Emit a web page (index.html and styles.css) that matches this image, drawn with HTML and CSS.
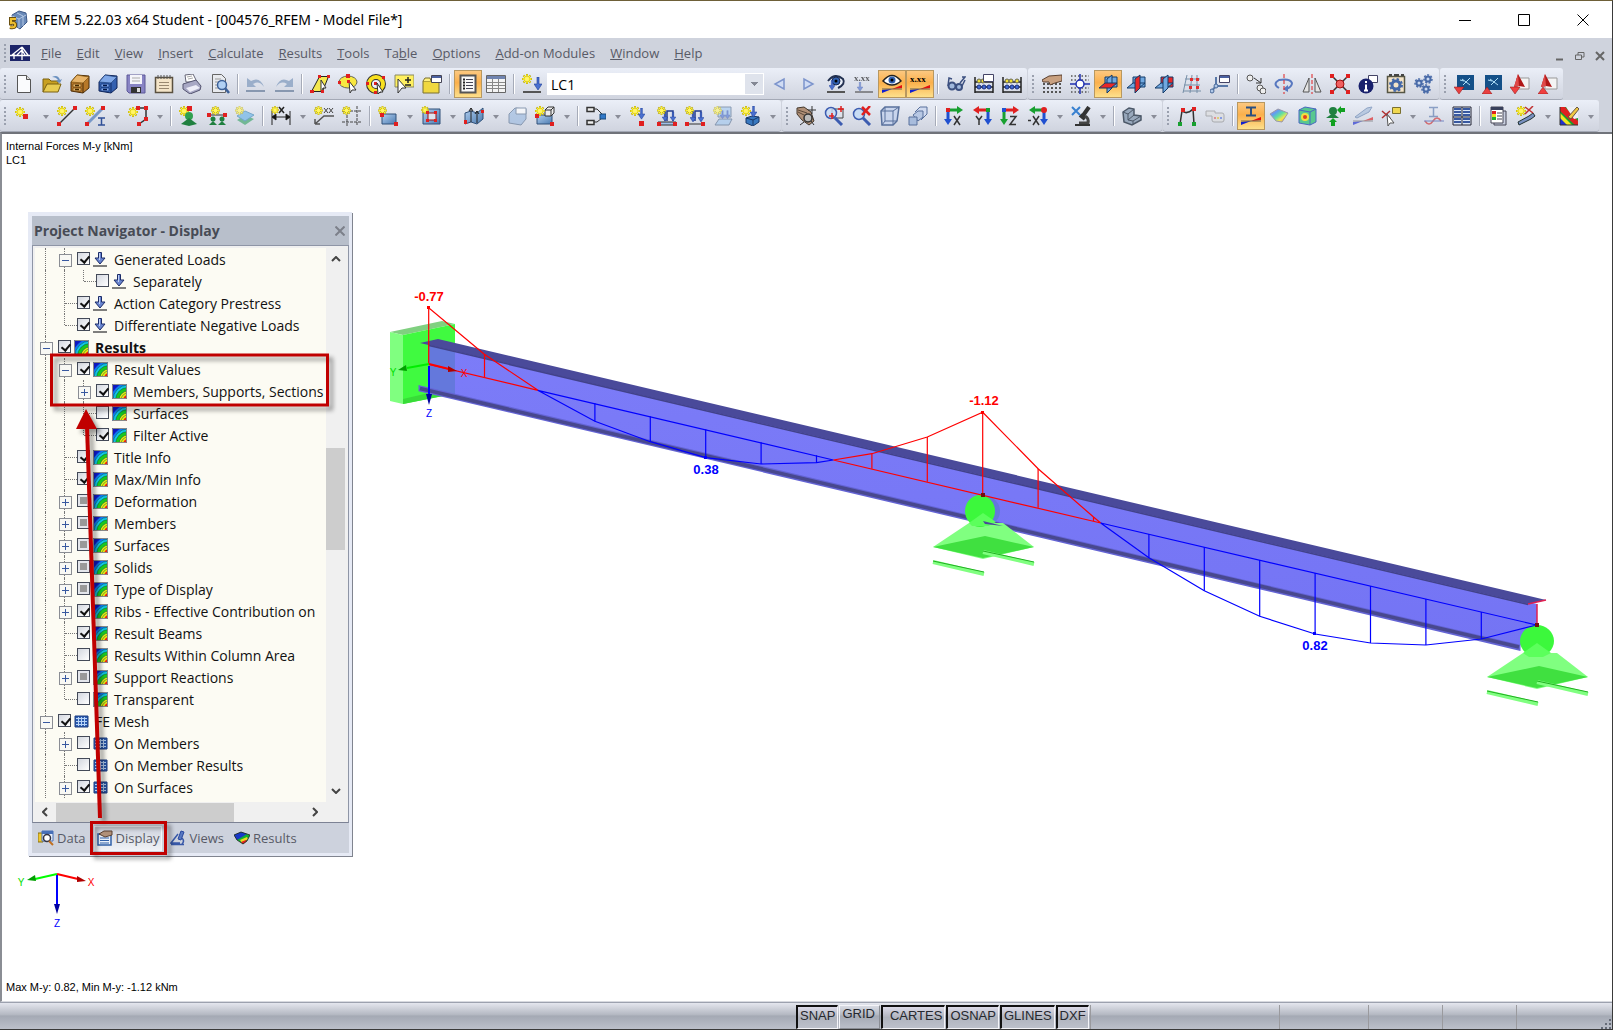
FILE: index.html
```
<!DOCTYPE html>
<html lang="en">
<head>
    <meta charset="UTF-8">
    <meta name="viewport" content="width=device-width, initial-scale=1.0">
    <title>RFEM 5.22.03 x64 Student</title>
    <link rel="stylesheet" href="styles.css">
</head>
<body>
    <!-- shared icon parts -->
    <svg class="sprite" aria-hidden="true">
        <defs>
            <linearGradient id="g-blue" x1="0" y1="0" x2="1" y2="1"><stop offset="0" stop-color="#b4d0f0"/><stop offset="1" stop-color="#4a7ab0"/></linearGradient>
            <linearGradient id="g-web" x1="0" y1="0" x2="0" y2="1"><stop offset="0" stop-color="#7c7cf8"/><stop offset="1" stop-color="#7474f4"/></linearGradient>
            <linearGradient id="g-rain" x1="0" y1="0" x2="1" y2="1"><stop offset="0" stop-color="#c070e0"/><stop offset=".3" stop-color="#60a0f0"/><stop offset=".5" stop-color="#60e0a0"/><stop offset=".7" stop-color="#f0e850"/><stop offset="1" stop-color="#f06040"/></linearGradient>
            <symbol id="star" viewBox="0 0 10 10"><path d="M5 0v10M0 5h10M1.500 1.500l7 7M8.500 1.500l-7 7" stroke="#b8a800" stroke-width="2"/><path d="M5 .5v9M.5 5h9M2 2l6 6M8 2L2 8" stroke="#fff23a" stroke-width="1.300"/><circle cx="5" cy="5" r="2" fill="#fff56a"/></symbol>
            <symbol id="down" viewBox="0 0 8 14"><path d="M3 0h2v7h3l-4 6-4-6h3z" fill="#4a70d0" stroke="#1c3c98" stroke-width=".6"/></symbol>
            <symbol id="load" viewBox="0 0 15 15"><path d="M5.500 .5h3V6H12l-5 6-5-6h3.500z" fill="#6a86d0" stroke="#1c2c68"/><path d="M6.500 1v7" stroke="#c0d0f4"/><path d="M0 14h14" stroke="#555" stroke-width="1.500"/></symbol>
            <symbol id="res" viewBox="0 0 15 15"><path fill="#1018c0" d="M0 0h15v15H0z"/><circle cx="16" cy="16" r="17" fill="#1078f0"/><circle cx="16" cy="16" r="15" fill="#10c8e8"/><circle cx="16" cy="16" r="12.500" fill="#18c820"/><circle cx="16" cy="16" r="9" fill="#e8f010"/><circle cx="16" cy="16" r="5" fill="#f02010"/><g fill="none" stroke="#104848" stroke-width=".5"><circle cx="16" cy="16" r="15"/><circle cx="16" cy="16" r="12.500"/><circle cx="16" cy="16" r="9"/><circle cx="16" cy="16" r="7"/></g><path d="M.5 .5h14v14H.5z" fill="none" stroke="#888"/></symbol>
            <symbol id="mesh" viewBox="0 0 15 15"><path fill="#2c5cb0" d="M1 2h13v11H1z"/><path d="M2 4.500h11M2 7.500h11M2 10.500h11M4.500 3v9M7.500 3v9M10.500 3v9" stroke="#b8d4f8"/><path d="M1 2h13v11H1z" fill="none" stroke="#1c3c80"/></symbol>
            <symbol id="p-back" viewBox="0 0 20 20"><path d="M7 3h12v10H7z" stroke="#123a68"/></symbol>
            <symbol id="p-side" viewBox="0 0 20 20"><path d="M9 5l5-4v13l-5 5z" stroke="#123a68"/></symbol>
            <symbol id="p-floor" viewBox="0 0 20 20"><path d="M1 14l6-5h12l-6 5z" stroke="#123a68"/></symbol>
            <symbol id="eye" viewBox="0 0 20 12"><path d="M1 7q9-11 18 0-9 8-18 0z" fill="#fff" stroke="#222" stroke-width="1.500"/><circle cx="10" cy="6" r="3.500" fill="#3060b0"/><circle cx="10" cy="6" r="1.500"/></symbol>
            <symbol id="diag" viewBox="0 0 20 8"><path d="M0 8V5l10-1z" fill="#1020d0"/><path d="M10 4l10-4v3z" fill="#e01010"/><path d="M0 4h20" stroke="#444" stroke-width=".8"/></symbol>
            <symbol id="stand" viewBox="0 0 104 84"><path d="M1 53l36-24h34l31 24-51 12z" fill="#80ff80"/><path d="M1 53l52-11 49 11-51 11z" fill="#40e040"/><path d="M1 68l51 12M51 58l51 12" stroke="#80ff80" stroke-width="4"/><path d="M1 67l51 11M51 57l51 11" stroke="#20b020"/></symbol>
        </defs>
    </svg>

    <header class="titlebar">
        <svg class="app-logo" viewBox="0 0 20 20"><path d="M4 5l7-4 7 2 1 9-7 7-6-4z" fill="#6a8ab8" stroke="#3c5888"/><path d="M9 3l6 3v10M4 6l7 3 7-4M11 9v9" stroke="#b4c8e4" fill="none"/><path d="M8 9H3v4q5-1 4 3-1 2-5 1" fill="none" stroke="#6a5010" stroke-width="4"/><path d="M8 9H3v4q5-1 4 3-1 2-5 1" fill="none" stroke="#f0c030" stroke-width="2"/></svg>
        <h1>RFEM 5.22.03 x64 Student - [004576_RFEM - Model File*]</h1>
        <div class="window-buttons">
            <button aria-label="Minimize"><svg viewBox="0 0 12 12"><path d="M0 6.500h12"/></svg></button>
            <button aria-label="Maximize"><svg viewBox="0 0 12 12"><path d="M.5 .5h11v11H.5z"/></svg></button>
            <button aria-label="Close"><svg viewBox="0 0 12 12"><path d="M.5 .5l11 11M11.500 .5l-11 11"/></svg></button>
        </div>
    </header>

    <nav class="menubar">
        <i class="grip"></i>
        <svg class="bridge" viewBox="0 0 20 16"><path fill="#1c2468" d="M0 0h20v16H0z"/><path d="M0 10.500h20M12 2v13M4 8v6M12 2L2 10M12 2l6 8M12 5l-5 5M12 5l3 5" stroke="#fff" stroke-width="1.300" fill="none"/></svg>
        <a href="#"><u>F</u>ile</a>
        <a href="#"><u>E</u>dit</a>
        <a href="#"><u>V</u>iew</a>
        <a href="#"><u>I</u>nsert</a>
        <a href="#"><u>C</u>alculate</a>
        <a href="#"><u>R</u>esults</a>
        <a href="#"><u>T</u>ools</a>
        <a href="#">Ta<u>b</u>le</a>
        <a href="#"><u>O</u>ptions</a>
        <a href="#"><u>A</u>dd-on Modules</a>
        <a href="#"><u>W</u>indow</a>
        <a href="#"><u>H</u>elp</a>
        <div class="mdi-buttons">
            <button aria-label="Minimize document"><svg viewBox="0 0 10 10"><path d="M1 8.500h7"/></svg></button>
            <button aria-label="Restore document"><svg viewBox="0 0 10 10"><path d="M.5 4h6v4.500h-6zM3 4V1.500h6V6H7" stroke-width="1"/></svg></button>
            <button aria-label="Close document"><svg viewBox="0 0 10 10"><path d="M1 1l8 8M9 1L1 9"/></svg></button>
        </div>
    </nav>

    <div class="toolbar-row">
        <div class="toolbar">
            <i class="grip"></i>
            <button class="tb" title="New"><svg viewBox="0 0 20 20"><path d="M3.500 1.500h9l4 4v13h-13z" fill="#fafbfd" stroke="#555"/><path d="M12.500 1.500v4h4" fill="#ddd" stroke="#555"/></svg></button>
            <button class="tb" title="Open"><svg viewBox="0 0 20 20"><path d="M1 18V5h6l2 2h7v4" fill="#c8a020" stroke="#7a6010"/><path d="M1 18l4-8h14l-3 8z" fill="#e8cc50" stroke="#7a6010"/><path d="M10 3q6-3 8 3l2-1-2 4-4-2 2-1q-2-3-6-3z" fill="#6a90c0"/></svg></button>
            <button class="tb" title="Project manager"><svg viewBox="0 0 20 20"><path d="M1 8l6-7 12 1v12l-6 5-12-2z" fill="#b87828" stroke="#4a2c08"/><path d="M1 8l12 1 6-6-12-2z" fill="#e8b468" stroke="#7a5010" stroke-width=".7"/><path d="M13 9v10" stroke="#4a2c08"/><path d="M3 10h8v3H3zM3 14h8v3H3z" fill="#e8b868" stroke="#6a4010" stroke-width=".7"/><path d="M5 11.500h4M5 15.500h4" stroke="#442800" stroke-width="1.500"/></svg></button>
            <button class="tb" title="Block manager"><svg viewBox="0 0 20 20"><path d="M1 8l6-7 12 1v12l-6 5-12-2z" fill="#3460b0" stroke="#102458"/><path d="M1 8l12 1 6-6-12-2z" fill="#80a8e8" stroke="#204078" stroke-width=".7"/><path d="M13 9v10" stroke="#102c68"/><path d="M3 10h8v3H3zM3 14h8v3H3z" fill="#80a8f0" stroke="#103070" stroke-width=".7"/><path d="M5 11.500h4M5 15.500h4" stroke="#021848" stroke-width="1.500"/></svg></button>
            <button class="tb" title="Save"><svg viewBox="0 0 20 20"><path d="M1 1h18v18H3l-2-2z" fill="#8884c4" stroke="#5c5898"/><path fill="#f4f4fa" d="M4 1h12v9H4z"/><path d="M6 4h8M6 7h8" stroke="#aaa"/><path fill="#333" d="M5 13h10v6H5z"/><path fill="#ddd" d="M11 14h3v4h-3z"/></svg></button>
            <button class="tb" title="Printout report"><svg viewBox="0 0 20 20"><path d="M1.500 3.500h17v15h-17z" fill="#f4e4c8" stroke="#5a5040" stroke-width="1.500"/><path d="M4 1v4M7 1v4M10 1v4M13 1v4M16 1v4" stroke="#555"/><path d="M5 8.500h10M5 11.500h10M5 14.500h10" stroke="#998870"/></svg></button>
            <button class="tb" title="Print"><svg viewBox="0 0 20 20"><path d="M4 8L3 1l8-1 4 8z" fill="#fff" stroke="#667"/><path d="M1 10l13-4 5 6-1 4-10 4-7-5z" fill="#a8a8c4" stroke="#555570"/><path d="M4 14l10-3 4 3-10 4z" fill="#eeeef8"/><path d="M5 3l5-1M6 5l5-1" stroke="#aaa"/></svg></button>
            <button class="tb" title="Print preview"><svg viewBox="0 0 20 20"><path d="M2.500 .5h9l4 4v14h-13z" fill="#e8eaee" stroke="#666"/><path d="M5 5h6M5 8h7M5 11h4M5 14h4" stroke="#999"/><circle cx="12" cy="11" r="4.500" fill="#b0d0f4" stroke="#3c6098" stroke-width="1.500"/><path d="M15 14l4 5" stroke="#3c6098" stroke-width="2.500"/></svg></button>
            <i class="sep"></i>
            <button class="tb" title="Undo"><svg viewBox="0 0 20 20"><path d="M1 4v9h9l-3-3q6-4 11 3Q14 2 5 7z" fill="#9aaeca"/><path d="M0 17h19" stroke="#8898b0" stroke-width="2"/></svg></button>
            <button class="tb" title="Redo"><svg viewBox="0 0 20 20"><path d="M19 4v9h-9l3-3Q7 6 2 13 6 2 15 7z" fill="#9aaeca"/><path d="M1 17h19" stroke="#8898b0" stroke-width="2"/></svg></button>
            <i class="sep"></i>
            <button class="tb" title="Select by parallelogram"><svg viewBox="0 0 20 20"><path d="M1.500 17.500l8-15h9l-6 15z" fill="#f4e850" stroke="#222"/><path d="M11 6l5 8-3 0-2 4z" fill="#fff" stroke="#333"/><path d="M0 16h4v3H0zM8 1h3v3H8zM17 1h3v3h-3zM11 16h3v3h-3z" fill="#e02020"/></svg></button>
            <button class="tb" title="Select by ellipse"><svg viewBox="0 0 20 20"><ellipse cx="10" cy="8" rx="9" ry="6" fill="#f8e840" stroke="#665"/><path d="M11 7l7 9h-4l-2 3z" fill="#fff" stroke="#333"/><path d="M8 0h4v4H8zM0 7h3v3H0zM9 6h3v3H9z" fill="#e02020"/></svg></button>
            <button class="tb" title="Select by ring"><svg viewBox="0 0 20 20"><circle cx="10" cy="10" r="7" fill="#eceef8" stroke="#333" stroke-width="6"/><circle cx="10" cy="10" r="7" fill="none" stroke="#f8e020" stroke-width="4"/><path d="M8 8h3v3H8zM0 8h3v3H0zM16 2h3v3h-3zM8 17h3v3H8z" fill="#e02020"/><path d="M11 9l6 9h-3l-2 2z" fill="#fff" stroke="#333"/></svg></button>
            <button class="tb" title="Select objects"><svg viewBox="0 0 20 20"><path d="M1 1h19v12H1z" fill="#fff060" stroke="#886"/><path d="M14 3v6M11 6h6M11 11h6" stroke="#222" stroke-width="1.500"/><path d="M4 5l8 9H8l-4 5z" fill="#fff" stroke="#333"/></svg></button>
            <button class="tb" title="Special selection"><svg viewBox="0 0 20 20"><path d="M1 7h16v12H1z" fill="#f0d840" stroke="#7a7030"/><path d="M1 7l2-3h5l1 3" fill="#fff080" stroke="#7a7030"/><path d="M9.500 1.500h10v7h-10z" fill="#fff" stroke="#445"/><path d="M10 3h9" stroke="#4a60a0" stroke-width="2"/></svg></button>
            <i class="sep"></i>
            <button class="tb on" title="Navigator"><svg viewBox="0 0 20 20"><path d="M2.500 1.500h15v17h-15z" fill="#f8f8f8" stroke="#555" stroke-width="2"/><path d="M8 5.500h7M8 8.500h7M8 11.500h7M8 14.500h7" stroke="#445"/><path d="M5 5.500h2M5 8.500h2M5 11.500h2M5 14.500h2" stroke="#222" stroke-width="2"/></svg></button>
            <button class="tb" title="Tables"><svg viewBox="0 0 20 20"><path d="M.5 1.500h19v17H.5z" fill="#f4f4f4" stroke="#666"/><path fill="#7084b0" d="M1 2h18v3H1z"/><path d="M1 8.500h18M1 11.500h18M1 14.500h18M6.500 5v13M12.500 5v13" stroke="#888"/></svg></button>
            <i class="sep"></i>
            <button class="tb" title="New load case"><svg viewBox="0 0 20 20"><use href="#star" width="10" height="10"/><use href="#down" x="12" y="3" width="8" height="14"/><path d="M1 18h18" stroke="#555" stroke-width="2"/></svg></button>
            <select class="loadcase" aria-label="Load case"><option>LC1</option></select>
            <button class="tb" title="Previous"><svg viewBox="0 0 20 20"><path d="M14 5v10L5 10z" fill="#d0dcf4" stroke="#7c94cc" stroke-width="1.500"/></svg></button>
            <button class="tb" title="Next"><svg viewBox="0 0 20 20"><path d="M6 5v10l9-5z" fill="#d0dcf4" stroke="#7c94cc" stroke-width="1.500"/></svg></button>
            <button class="tb" title="Show loads"><svg viewBox="0 0 20 20"><path d="M1 18h18" stroke="#555" stroke-width="2"/><path d="M2 7q7-9 15-2 3 5-5 9" fill="#e8eef8" stroke="#223050" stroke-width="2"/><circle cx="10" cy="7" r="4" fill="#3060b0" stroke="#182850"/><circle cx="10" cy="7" r="1.500"/><use href="#down" x="3" y="5" width="6" height="13"/></svg></button>
            <button class="tb off" title="Show load values"><svg viewBox="0 0 20 20"><text x="0" y="7" class="xx">x.xx</text><use href="#down" x="3" y="8" width="6" height="10"/><path d="M1 18h18" stroke="#555" stroke-width="2"/></svg></button>
            <button class="tb on" title="Show results"><svg viewBox="0 0 20 20"><use href="#eye" width="20" height="12"/><use href="#diag" y="11" width="20" height="8"/></svg></button>
            <button class="tb on" title="Show result values"><svg viewBox="0 0 20 20"><text x="0" y="8" class="xx">x.xx</text><use href="#diag" y="11" width="20" height="8"/></svg></button>
            <i class="sep"></i>
            <button class="tb" title="Calculation glasses"><svg viewBox="0 0 20 20"><path d="M2 12l1-8 3 1M14 9l5-6-3 0" fill="none" stroke="#3c5080" stroke-width="1.500"/><circle cx="6" cy="12" r="3.500" fill="#a0b8dc" stroke="#3c5080" stroke-width="2"/><circle cx="13" cy="13" r="3" fill="#a0b8dc" stroke="#3c5080" stroke-width="2"/><path d="M16 12l3-6" stroke="#3c5080" stroke-width="1.500"/></svg></button>
            <button class="tb" title="Calculate all"><svg viewBox="0 0 20 20"><path d="M1 3v16M19 3v16M1 8h18M1 13h18M1 18h18" stroke="#222" stroke-width="1.500"/><g fill="#f0e030" stroke="#665"><circle cx="5" cy="7" r="2"/><circle cx="9" cy="7" r="2"/></g><g fill="#4068d0" stroke="#1c3080"><circle cx="5" cy="13" r="2"/><circle cx="10" cy="13" r="2"/><circle cx="15" cy="13" r="2"/></g><path d="M9.500 .5h10v7h-10z" fill="#fff" stroke="#446"/></svg></button>
            <button class="tb" title="Calculate"><svg viewBox="0 0 20 20"><path d="M1 3v16M19 3v16M1 8h18M1 13h18M1 18h18" stroke="#222" stroke-width="1.500"/><g fill="#f0e030" stroke="#665"><circle cx="5" cy="7" r="2"/><circle cx="9" cy="7" r="2"/><circle cx="15" cy="7" r="2"/></g><g fill="#4068d0" stroke="#1c3080"><circle cx="5" cy="13" r="2"/><circle cx="10" cy="13" r="2"/><circle cx="15" cy="13" r="2"/></g></svg></button>
        </div>
        <div class="toolbar">
            <i class="grip"></i>
            <button class="tb" title="Work plane"><svg viewBox="0 0 20 20"><path d="M1 10h18M1 14h18M1 18h18" stroke="#555" stroke-width="2" stroke-dasharray="2 2"/><path d="M0 6l7-4 13-1v6l-7 2-5 2-1-3H1z" fill="#c8a080" stroke="#5a4030"/></svg></button>
            <button class="tb" title="Grid"><svg viewBox="0 0 20 20"><path d="M1 2h18M1 6h18M1 14h18M1 18h18" stroke="#555" stroke-width="1.500" stroke-dasharray="1.500 2"/><path d="M10 0v20M0 10h20" stroke="#2030b0" stroke-width="1.500"/><circle cx="10" cy="10" r="4" fill="#fff" stroke="#2030b0" stroke-width="1.500"/></svg></button>
            <button class="tb on" title="Plane XY"><svg viewBox="0 0 20 20"><use href="#p-back" class="pl"/><use href="#p-side" class="pl"/><use href="#p-floor" class="pl hot"/></svg></button>
            <button class="tb" title="Plane YZ"><svg viewBox="0 0 20 20"><use href="#p-back" class="pl"/><use href="#p-floor" class="pl"/><use href="#p-side" class="pl hot"/></svg></button>
            <button class="tb" title="Plane XZ"><svg viewBox="0 0 20 20"><use href="#p-back" class="pl hot"/><use href="#p-floor" class="pl"/><use href="#p-side" class="pl"/></svg></button>
            <button class="tb" title="Guidelines"><svg viewBox="0 0 20 20"><path d="M5 1L1 19M10 1L8 19M15 1v18M3 5h15M2 11h16M1 17h18" stroke="#7890a8" fill="none"/><path d="M8 4h3v3H8zM14 4h3v3h-3zM7 12h3v3H7zM14 12h3v3h-3z" fill="#e03030"/></svg></button>
            <button class="tb" title="Coordinate systems"><svg viewBox="0 0 20 20"><path d="M6 3v9l-5 6M6 12h12" stroke="#5878a8" stroke-width="2" fill="none"/><circle cx="6" cy="12" r="2" fill="#b0c8e8" stroke="#486898"/><circle cx="2" cy="17" r="2" fill="#b0c8e8" stroke="#486898"/><path d="M9.500 1.500h10v7h-10z" fill="#fff" stroke="#446"/><path d="M10 3h9" stroke="#4a60a0" stroke-width="2"/></svg></button>
            <i class="sep"></i>
            <button class="tb" title="Move"><svg viewBox="0 0 20 20"><circle cx="4" cy="4" r="3" fill="#eee" stroke="#555"/><circle cx="14" cy="14" r="3" fill="#eee" stroke="#555"/><circle cx="17" cy="17" r="3" fill="#eee" stroke="#555"/><path d="M8 4l7 5M15 4v5h-5" stroke="#333" fill="none"/></svg></button>
            <button class="tb" title="Rotate"><svg viewBox="0 0 20 20"><path d="M5 14Q-2 10 5 6q11-2 13 3 0 4-6 6" fill="none" stroke="#5878c0" stroke-width="2"/><path d="M14 11v7l-5-3z" fill="#5878c0"/><path d="M10 0v20" stroke="#e02020" stroke-dasharray="4 2"/></svg></button>
            <button class="tb" title="Mirror"><svg viewBox="0 0 20 20"><path d="M7 4v14H1zM13 4v14h6z" fill="#e4e4e4" stroke="#555"/><path d="M10 0v20" stroke="#e02020" stroke-dasharray="4 2"/></svg></button>
            <button class="tb" title="Divide"><svg viewBox="0 0 20 20"><path d="M2 2l16 16M18 2L2 18" stroke="#333" stroke-width="1.500"/><circle cx="10" cy="10" r="4" fill="#f06060" stroke="#a01010"/><path d="M0 0h4v4H0zM16 0h4v4h-4zM0 16h4v4H0zM16 16h4v4h-4z" fill="#e02020"/></svg></button>
            <button class="tb" title="Info"><svg viewBox="0 0 20 20"><path d="M10.500 1.500h9v7h-9z" fill="#fff" stroke="#446"/><circle cx="8" cy="12" r="7.500" fill="#18206c"/><path d="M8 7v2M8 10.500V16M6 16.500h4" stroke="#fff" stroke-width="2"/></svg></button>
            <button class="tb" title="Display properties"><svg viewBox="0 0 20 20"><path d="M1.500 2.500h17v16h-17z" fill="#f4e4c8" stroke="#554" stroke-width="1.500"/><path d="M3 1h3M8 1h5M15 1h3" stroke="#444" stroke-width="2"/><circle cx="10" cy="11" r="4" fill="none" stroke="#4468a8" stroke-width="3"/><circle cx="10" cy="11" r="6" fill="none" stroke="#4468a8" stroke-width="2" stroke-dasharray="2.400 2.300"/></svg></button>
            <button class="tb" title="Settings"><svg viewBox="0 0 20 20"><g fill="#c8d8f0" stroke="#486aa8" stroke-width="2"><circle cx="14" cy="5" r="2.500"/><circle cx="5" cy="9" r="2.500"/><circle cx="12" cy="15" r="2.500"/></g><g fill="none" stroke="#486aa8" stroke-width="1.500" stroke-dasharray="2 1.500"><circle cx="14" cy="5" r="4"/><circle cx="5" cy="9" r="4"/><circle cx="12" cy="15" r="4"/></g></svg></button>
        </div>
        <div class="toolbar">
            <i class="grip"></i>
            <button class="tb" title="Export to DXF"><svg viewBox="0 0 20 20"><path fill="#145088" d="M3 1h17v15H3z"/><path d="M8 5l8 6M16 4l-7 7M6 6l4 1" stroke="#b0e0f8"/><path d="M0 13h10l-5 7z" fill="#e84040" stroke="#901010" stroke-width=".5"/></svg></button>
            <button class="tb" title="Import from DXF"><svg viewBox="0 0 20 20"><path fill="#145088" d="M3 1h17v15H3z"/><path d="M8 5l8 6M16 4l-7 7M6 6l4 1" stroke="#b0e0f8"/><path d="M0 20h10l-5-7z" fill="#e84040" stroke="#901010" stroke-width=".5"/></svg></button>
            <button class="tb" title="Export to CAD"><svg viewBox="0 0 20 20"><path d="M7 4h12v11H7z" fill="#f4f4f4" stroke="#999"/><path d="M4 13L8 0l7 13-6-1z" fill="#b01818"/><path d="M8 0l1 12-5 1z" fill="#e04848"/><path d="M0 13h10l-5 7z" fill="#f04040" stroke="#901010" stroke-width=".5"/></svg></button>
            <button class="tb" title="Import from CAD"><svg viewBox="0 0 20 20"><path d="M7 4h12v11H7z" fill="#f4f4f4" stroke="#999"/><path d="M3 13L7 0l7 13-6-1z" fill="#b01818"/><path d="M7 0l1 12-5 1z" fill="#e04848"/><path d="M0 20h10l-5-7z" fill="#f04040" stroke="#901010" stroke-width=".5"/></svg></button>
        </div>
    </div>

    <div class="toolbar-row">
        <div class="toolbar">
            <i class="grip"></i>
            <button class="tb" title="New node"><svg viewBox="0 0 20 20"><use href="#star" x="1" y="1" width="10" height="10"/><path fill="#e02020" d="M9 8h5v5H9z"/></svg></button>
            <button class="dd" aria-label="Node options"></button>
            <button class="tb" title="New line"><svg viewBox="0 0 20 20"><path d="M2 18L18 2" stroke="#333" stroke-width="1.500"/><use href="#star" width="10" height="10"/><path fill="#e02020" d="M0 16h4v4H0zM16 0h4v4h-4z"/></svg></button>
            <button class="tb" title="New member"><svg viewBox="0 0 20 20"><path d="M2 18L18 2" stroke="#7898c8" stroke-width="3"/><use href="#star" width="10" height="10"/><path fill="#e02020" d="M0 16h4v4H0zM16 0h4v4h-4z"/><path d="M13 12h7M13 19h7M16.500 12v7" stroke="#305098" stroke-width="1.500"/></svg></button>
            <button class="dd" aria-label="Member options"></button>
            <button class="tb" title="New polyline"><svg viewBox="0 0 20 20"><path d="M9 2h9v11l-7 5" stroke="#333" stroke-width="1.500" fill="none"/><use href="#star" y="1" width="10" height="10"/><path fill="#e02020" d="M8 0h4v4H8zM16 0h4v4h-4zM16 11h4v4h-4zM9 16h4v4H9z"/></svg></button>
            <button class="dd" aria-label="Polyline options"></button>
            <i class="sep"></i>
            <button class="tb" title="New nodal support"><svg viewBox="0 0 20 20"><use href="#star" width="10" height="10"/><path fill="#e02020" d="M8 0h5v5H8z"/><circle cx="10" cy="10" r="4" fill="#30a050"/><path d="M2 18l8-6 8 6-8 2z" fill="#208040"/></svg></button>
            <button class="tb" title="New line support"><svg viewBox="0 0 20 20"><path d="M1 9h18" stroke="#333"/><use href="#star" x="4" width="9" height="9"/><path fill="#e02020" d="M0 7h4v4H0zM16 7h4v4h-4z"/><g fill="#208040"><circle cx="6" cy="13" r="2.500"/><path d="M2 19l4-4 4 4z"/><circle cx="15" cy="13" r="2.500"/><path d="M11 19l4-4 4 4z"/></g></svg></button>
            <button class="tb off" title="New surface support"><svg viewBox="0 0 20 20"><path d="M2 14l8-5 9 4-9 6z" fill="#30a060"/><path d="M2 10l8-5 9 4-9 6z" fill="#60b0e8" stroke="#3080b0"/><use href="#star" width="9" height="9"/></svg></button>
            <i class="sep"></i>
            <button class="tb" title="Dimension"><svg viewBox="0 0 20 20"><path d="M1 5v14M19 5v14M1 11h18M1 11l4-3v6zM19 11l-4-3v6z" stroke="#222"/><use href="#star" width="8" height="8"/><path d="M8 1l5 6M13 1L8 7" stroke="#222" stroke-width="1.500"/></svg></button>
            <button class="dd" aria-label="Dimension options"></button>
            <button class="tb" title="Comment"><svg viewBox="0 0 20 20"><path d="M20 10h-10L1 18M1 18v-5M1 18h5" stroke="#555" stroke-width="1.500" fill="none"/><use href="#star" width="9" height="9"/><path d="M10 2l4 5M14 2l-4 5M15 2l4 5M19 2l-4 5" stroke="#444"/></svg></button>
            <button class="tb" title="Section"><svg viewBox="0 0 20 20"><path d="M5 5v15M15 0v20M0 5h20M0 16h20" stroke="#444" stroke-dasharray="3 1"/><use href="#star" width="9" height="9"/></svg></button>
            <i class="sep"></i>
            <button class="tb" title="New surface"><svg viewBox="0 0 20 20"><path d="M4 8h14v10H4z" fill="url(#g-blue)" stroke="#305078"/><use href="#star" width="9" height="9"/><path fill="#e02020" d="M2 7h4v4H2zM16 16h4v4h-4z"/></svg></button>
            <button class="dd" aria-label="Surface options"></button>
            <button class="tb" title="New opening"><svg viewBox="0 0 20 20"><path d="M2 3h17v15H2z" fill="url(#g-blue)" stroke="#305078"/><path d="M7 7h8v7H7z" fill="#dce4f0" stroke="#a01010"/><use href="#star" width="8" height="8"/><path fill="#e02020" d="M5 5h3v3H5zM13 5h3v3h-3zM5 13h3v3H5zM13 13h3v3h-3z"/></svg></button>
            <button class="dd" aria-label="Opening options"></button>
            <button class="tb" title="Connection"><svg viewBox="0 0 20 20"><path d="M1 7l6-2 6 2 6-5v11l-6 5-6-2-6 2z" fill="url(#g-blue)" stroke="#305078"/><path d="M7 2v14M13 5v12M5 5l2-3 2 3M11 8l2-3 2 3" stroke="#222" fill="none"/><path fill="#e02020" d="M0 14h3v4H0zM17 4h3v3h-3z"/></svg></button>
            <button class="dd" aria-label="Connection options"></button>
            <button class="tb off" title="Solid"><svg viewBox="0 0 20 20"><path d="M2 8l6-6 11 1v10l-5 6-12-2z" fill="#98b8e0" stroke="#506888"/><path d="M9 2h10v6H9z" fill="#fff" stroke="#506888"/></svg></button>
            <button class="tb" title="New solid"><svg viewBox="0 0 20 20"><path d="M2 9h15v9H2z" fill="url(#g-blue)" stroke="#305078"/><path d="M10 4l3-3h6v6l-3 3h-6z" fill="#eee" stroke="#333"/><path d="M10 4h6v6M16 4l3-3" fill="none" stroke="#333"/><use href="#star" width="10" height="10"/><path fill="#e02020" d="M0 8h4v4H0zM15 16h4v4h-4z"/></svg></button>
            <button class="dd" aria-label="Solid options"></button>
            <i class="sep"></i>
            <button class="tb" title="Structure"><svg viewBox="0 0 20 20"><path d="M1 1.500h7v4H1zM1 14.500h7v4H1z" fill="#eee" stroke="#333" stroke-width="1.500"/><path d="M8 3h3l5 5M8 16h3l5-4" fill="none" stroke="#333"/><path fill="#3078c8" stroke="#184878" d="M14 8h6v5h-6z"/></svg></button>
            <button class="dd" aria-label="Structure options"></button>
            <button class="tb" title="Nodal load"><svg viewBox="0 0 20 20"><use href="#star" x="1" width="10" height="10"/><use href="#down" x="9" y="2" width="7" height="12"/><path fill="#e02020" d="M10 15h5v5h-5z"/></svg></button>
            <button class="tb" title="Member load"><svg viewBox="0 0 20 20"><path d="M4 6h4v9M10 15V5h6v10" fill="none" stroke="#223c90" stroke-width="1.500"/><path fill="#a0c0e8" stroke="#333" d="M1 16h18v3H1z"/><use href="#down" x="5" y="6" width="6" height="10"/><use href="#down" x="13" y="6" width="6" height="10"/><use href="#star" width="9" height="9"/><path fill="#e02020" d="M0 16h4v4H0zM16 16h4v4h-4z"/></svg></button>
            <button class="tb" title="Line load"><svg viewBox="0 0 20 20"><path d="M4 6h4v9M10 15V5h6v10" fill="none" stroke="#223c90" stroke-width="1.500"/><path d="M1 18h18" stroke="#333"/><use href="#down" x="5" y="6" width="6" height="11"/><use href="#down" x="13" y="6" width="6" height="11"/><use href="#star" width="9" height="9"/><path fill="#e02020" d="M0 16h4v4H0zM16 16h4v4h-4z"/></svg></button>
            <button class="tb off" title="Surface load"><svg viewBox="0 0 20 20"><path d="M5 1h13v10H5zM2 19l4-6h13l-3 6z" fill="#a0c8f0" stroke="#506888"/><use href="#down" x="7" y="4" width="5" height="10"/><use href="#down" x="12" y="4" width="5" height="10"/><use href="#star" width="9" height="9"/></svg></button>
            <button class="tb" title="Solid load"><svg viewBox="0 0 20 20"><path d="M5 12l6-2 7 1v5l-6 4-7-3z" fill="#3878c0" stroke="#183868"/><path d="M5 12l7 2 6-3M12 14v5" stroke="#183868" fill="none"/><use href="#down" x="9" y="0" width="7" height="12"/><use href="#star" width="10" height="10"/></svg></button>
            <button class="dd" aria-label="Load options"></button>
        </div>
        <div class="toolbar">
            <i class="grip"></i>
            <button class="tb" title="Edit view"><svg viewBox="0 0 20 20"><path d="M1 2l7-1 7 5 3 9-5 4-7-5-5-6z" fill="#b09078" stroke="#44382c"/><path d="M2 6l8 4M2 4l9 3" stroke="#5a4838"/><circle cx="12" cy="12" r="4" fill="#bbb" stroke="#333" stroke-width="1.500"/><path d="M16 0v8M12 4h8M8 16l-4 3M15 15l3 4" stroke="#333"/></svg></button>
            <button class="tb" title="Zoom window"><svg viewBox="0 0 20 20"><path d="M8 3h11v9H8z" fill="none" stroke="#444"/><circle cx="7" cy="7" r="5.500" fill="#c8dcf4" fill-opacity=".8" stroke="#3c5cb0" stroke-width="1.500"/><path d="M11 12l7 7" stroke="#3c5cb0" stroke-width="3"/><path d="M17 0v6M14 3h6M5 10h5M8 7v6" stroke="#e02020" stroke-width="1.500"/></svg></button>
            <button class="tb" title="Zoom all"><svg viewBox="0 0 20 20"><circle cx="7" cy="8" r="5.500" fill="#c8dcf4" stroke="#3c5cb0" stroke-width="1.500"/><path d="M11 12l7 7" stroke="#3c5cb0" stroke-width="3"/><path d="M10 1l8 8M18 0l-8 9" stroke="#e02020" stroke-width="2.500"/></svg></button>
            <button class="tb" title="Isometric view"><svg viewBox="0 0 20 20"><path d="M1 5l4-4h14l-2 14-4 4H2z" fill="#c8d4ec" stroke="#58709c" stroke-width="1.500"/><path d="M1 5h12l6-4M13 5v14M5 1v14l-3 4M5 15h12" fill="none" stroke="#58709c"/></svg></button>
            <button class="tb" title="Perspective"><svg viewBox="0 0 20 20"><path d="M7 6l5-5h7v7l-6 6" fill="#d0daf0" stroke="#58709c"/><path d="M5 9l5-4h5v6l-5 4z" fill="#b8c8e4" stroke="#58709c"/><path d="M1 11h8v8H1z" fill="#a8bcdc" stroke="#58709c"/></svg></button>
            <i class="sep"></i>
            <button class="tb" title="View in X"><svg viewBox="0 0 20 20"><path d="M4 4h10" stroke="#18a030" stroke-width="3"/><path d="M13 0l6 4-6 4z" fill="#18a030"/><path d="M4 4v10" stroke="#2050d0" stroke-width="3"/><path d="M0 13h8l-4 6z" fill="#2050d0"/><path d="M2 2h4v4H2z" fill="#e02020"/><path d="M10 10l6 9M16 10l-6 9" stroke="#333" stroke-width="1.500"/></svg></button>
            <button class="tb" title="View in Y"><svg viewBox="0 0 20 20"><path d="M16 4H6" stroke="#e02020" stroke-width="3"/><path d="M7 0L1 4l6 4z" fill="#e02020"/><path d="M16 4v10" stroke="#2050d0" stroke-width="3"/><path d="M12 13h8l-4 6z" fill="#2050d0"/><path d="M14 2h4v4h-4z" fill="#18a030"/><path d="M4 10l3 4 3-4M7 14v5" stroke="#333" stroke-width="1.500" fill="none"/></svg></button>
            <button class="tb" title="View in Z"><svg viewBox="0 0 20 20"><path d="M4 4h10" stroke="#e02020" stroke-width="3"/><path d="M13 0l6 4-6 4z" fill="#e02020"/><path d="M4 4v10" stroke="#18a030" stroke-width="3"/><path d="M0 13h8l-4 6z" fill="#18a030"/><path d="M2 2h4v4H2z" fill="#2050d0"/><path d="M10 10.500h6l-6 8h6" stroke="#333" stroke-width="1.500" fill="none"/></svg></button>
            <button class="tb" title="View in -X"><svg viewBox="0 0 20 20"><path d="M16 4H6" stroke="#18a030" stroke-width="3"/><path d="M7 0L1 4l6 4z" fill="#18a030"/><path d="M16 4v10" stroke="#2050d0" stroke-width="3"/><path d="M12 13h8l-4 6z" fill="#2050d0"/><circle cx="16" cy="4" r="3" fill="#e02020"/><path d="M0 14.500h3M5 10l6 9M11 10l-6 9" stroke="#333" stroke-width="1.500"/></svg></button>
            <button class="dd" aria-label="View options"></button>
            <button class="tb" title="Visibility"><svg viewBox="0 0 20 20"><path d="M18 1l-7 10M9 9l5 4" stroke="#333" stroke-width="4" fill="none"/><path d="M8 17h9q1-5-3-7" stroke="#444" stroke-width="3" fill="none"/><path d="M4 19h15" stroke="#333" stroke-width="2"/><path d="M1 1l8 8M9 1L1 9" stroke="#3880d0" stroke-width="2"/></svg></button>
            <button class="dd" aria-label="Visibility options"></button>
            <i class="sep"></i>
            <button class="tb" title="Rendering"><svg viewBox="0 0 20 20"><path d="M1 6l6-4 5 1v6l7 1v4l-9 5-8-3z" fill="#98a8bc" stroke="#4c5868" stroke-width="1.500"/><path d="M1 6l5 2 6-5M6 8v6l5 1 8-5M11 15v4M6 14l6-5" fill="none" stroke="#4c5868"/></svg></button>
            <button class="dd" aria-label="Rendering options"></button>
        </div>
        <div class="toolbar">
            <i class="grip"></i>
            <button class="tb" title="Structure only"><svg viewBox="0 0 20 20"><path d="M3 18L5 5q5 4 11-2l1 15" fill="none" stroke="#333" stroke-width="1.500"/><path fill="#e02020" d="M4 2h4v4H4zM15 1h4v4h-4z"/><path fill="#18a030" d="M1 16h4v4H1zM15 16h4v4h-4z"/></svg></button>
            <button class="tb off" title="Capsule"><svg viewBox="0 0 20 20"><path d="M1 5h9v2h7q2 0 2 2v5q0 2-2 2H9q-2 0-2-2v-4H1z" fill="#ddd" stroke="#888"/><path fill="#e06060" d="M9 11h2v2H9z"/><path fill="#e0c030" d="M12 11h2v2h-2z"/><path fill="#5070e0" d="M15 11h2v2h-2z"/></svg></button>
            <i class="sep"></i>
            <button class="tb on" title="Members results"><svg viewBox="0 0 20 20"><path d="M5 1.500h10M5 9.500h10M10 1v9" stroke="#2c5080" stroke-width="2"/><use href="#diag" y="11" width="20" height="8"/></svg></button>
            <button class="tb" title="Surfaces results"><svg viewBox="0 0 20 20"><path d="M1 8l8-5 10 4-6 9-6-1z" fill="url(#g-rain)" stroke="#99a"/></svg></button>
            <button class="tb" title="Solids results"><svg viewBox="0 0 20 20"><path d="M2 4l6-3 11 2v13l-6 3-11-2z" fill="#58c890" stroke="#4868c0"/><circle cx="8" cy="11" r="4" fill="#f0e040"/><circle cx="8" cy="11" r="2" fill="#e04020"/><path d="M2 4l11 2v13M13 6l6-3" fill="none" stroke="#4868c0"/></svg></button>
            <button class="tb" title="Support reactions"><svg viewBox="0 0 20 20"><circle cx="8" cy="5" r="4" fill="#208040"/><path d="M1 12l7-5 6 5z" fill="#208040"/><path d="M12 4l4-4v2h4v4h-4v2zM8 12l4 4h-2v4H6v-4H4z" fill="#10a020"/></svg></button>
            <button class="tb off" title="Sections results"><svg viewBox="0 0 20 20"><path d="M2 11L14 2l5-1-3 5L4 12z" fill="#a0b8d8" stroke="#5878a8"/><use href="#diag" y="11" width="20" height="8"/></svg></button>
            <button class="tb" title="Clear results"><svg viewBox="0 0 20 20"><path d="M1 5l8 7M9 5l-8 7" stroke="#b03030" stroke-width="1.500"/><path d="M11.500 1.500h8v6h-8z" fill="#f0d850" stroke="#7a7030"/><path d="M6 8l7 9H9l-2 3z" fill="#fff" stroke="#555"/></svg></button>
            <button class="dd" aria-label="Clear options"></button>
            <button class="tb off" title="Result diagrams"><svg viewBox="0 0 20 20"><path d="M5 1.500h9M5 10.500h9M9.500 1v9" stroke="#5070a8" stroke-width="1.500"/><path d="M1 15q4 6 8 0t8 0" fill="none" stroke="#d02020" stroke-width="1.500"/><path d="M0 15h20" stroke="#3050b0"/></svg></button>
            <button class="tb" title="Result tables"><svg viewBox="0 0 20 20"><path d="M1 1h18v18H1z" fill="#dce8f8" stroke="#223"/><path d="M2 3h7M2 6h7M2 9h7M11 3h7M11 6h7M11 9h7M2 13h7M2 16h7M11 13h7M11 16h7" stroke="#3858a0" stroke-width="2"/><path d="M10 1v18M1 11h18" stroke="#223"/></svg></button>
            <i class="sep"></i>
            <button class="tb" title="Control panel"><svg viewBox="0 0 20 20"><path d="M6 5h12v14H6z" fill="#c8cede" stroke="#445"/><path d="M3 1h12v16H3z" fill="#fff" stroke="#445"/><path fill="#38405c" d="M3 1h12v3H3z"/><path stroke="#e02020" stroke-width="3" d="M4 6.500h4"/><path stroke="#f0e020" stroke-width="3" d="M4 9.500h4"/><path stroke="#20b030" stroke-width="3" d="M4 12.500h4"/><path d="M9 7h5M9 10h5M9 13h5" stroke="#445"/></svg></button>
            <button class="tb" title="Edit panel"><svg viewBox="0 0 20 20"><path d="M2 16l11-6 4-3 2 3-4 3-12 6z" fill="#7890c0" stroke="#233"/><use href="#star" width="10" height="10"/><path d="M9 1l8 6M17 0L9 8" stroke="#c03030" stroke-width="1.500"/></svg></button>
            <button class="dd" aria-label="Panel options"></button>
            <button class="tb" title="Color scale"><svg viewBox="0 0 20 20"><path fill="#18a030" d="M1 1h18v18H1z"/><path d="M1 7l12 12H1z" fill="#f0e820"/><path d="M1 12l7 7H1z" fill="#2030d0"/><path d="M1 1h5l13 14v4h-3L1 5z" fill="#e02020"/><path d="M7 1h12v11l-4 1z" fill="#eef0f4"/><path d="M9 11L18 1l2 2-8 10z" fill="#f0c840" stroke="#654"/><path d="M1 1v18h18" fill="none" stroke="#333"/></svg></button>
            <button class="dd" aria-label="Color options"></button>
        </div>
    </div>

    <main class="viewport">
        <svg class="model" viewBox="2 134 1610 866" preserveAspectRatio="xMinYMin meet">
            <text x="6" y="150" class="info">Internal Forces M-y [kNm]</text>
            <text x="6" y="164" class="info">LC1</text>
            <text x="6" y="991" class="info">Max M-y: 0.82, Min M-y: -1.12 kNm</text>

            <!-- fixed support -->
            <path d="M390 332l52-11 13 3-52 11z" fill="#80d080"/>
            <path d="M390 332l13 3v69l-13-3z" fill="#80ff80"/>
            <path d="M403 335l52-11v55l-12 17-40 8z" fill="#40fa40"/>
            <path d="M403 399l34-8 6 5-40 8z" fill="#38dc38"/>

            <!-- beam -->
            <path d="M429 343L1537 604v21l-18 22L429 391z" fill="url(#g-web)"/>
            <path d="M429 343l26 6v48l-26-6z" fill="#6478dc"/>
            <path d="M420 387L1519 646v3L420 390z" fill="#6464d4" stroke="#6464d4" stroke-width="3"/>
            <path d="M420 388.500L1519 647" stroke="#48488e" stroke-width="3.500"/>
            <path d="M420 343l18-4L1546 600l-18 4z" fill="#4a4a9a"/>
            <path d="M429 345.500L1528 604.500" stroke="#42428a" stroke-width="1.500"/>
            <path d="M1528 604l18-4M1537 604v21" stroke="#e02050" stroke-width="1.500"/>

            <!-- hinged supports -->
            <use href="#stand" x="932" y="494" width="104" height="84"/>
            <ellipse cx="985" cy="511" rx="15" ry="15" fill="#6478dc"/>
            <ellipse cx="980" cy="511" rx="15" ry="16" fill="#3cf83c"/>
            <path d="M969 523l14-10 13 9-8 4H972z" fill="#5cff5c"/>
            <path d="M983 521l20 5-18-2z" fill="#4a4a9a"/>
            <use href="#stand" x="1486" y="624" width="104" height="84"/>
            <ellipse cx="1537" cy="641" rx="17" ry="16" fill="#3cf83c"/>
            <path d="M1523 653l14-10 14 10-8 4h-14z" fill="#5cff5c"/>

            <!-- moment diagram -->
            <g fill="none" stroke="#f00" stroke-width="1.200">
                <path d="M428.700 364.300V307.700L484 354l54 36.300zM833.300 460l38.600-6.300 55.400-16.700 55.400-24.700 55.400 56.400 55.400 48.300 7.200 6z"/>
                <path d="M484.500 377.500V354M871.900 468.700v-15M927.300 481.700V437M982.700 494.700v-82.400M1038.100 507.700v-39M1093.500 521v-4"/>
            </g>
            <g fill="none" stroke="#00f" stroke-width="1.200">
                <path d="M537.700 390.300l57.200 31 55.400 20.400 55.400 16 55.400 6.300 55.400-1.300 16.800-2.700zM1100.700 523l48.200 34.700 55.400 33 55.400 25.600 55.400 17.700 55.400 9 55.400 2 55.400-6 55.400-14z"/>
                <path d="M594.900 403.300v18M650.300 416.300v25.400M705.700 429.300v28.400M761.100 442.300V464M816.500 455.300v7.400M1148.900 534v23.700M1204.300 547v43.700M1259.700 560v56.300M1315.100 573v61M1370.500 586v57M1425.900 599v46M1481.300 612v27"/>
            </g>
            <path d="M427 306h3v3h-3zM981 411h3v3h-3z" fill="#f00"/>
            <path d="M704 456h3v3h-3zM1313 632h3v3h-3z" fill="#00f"/>
            <path d="M981 493h4v4h-4zM1535 623h4v4h-4z" fill="#701010"/>
            <text x="429" y="301" class="value neg">-0.77</text>
            <text x="706" y="474" class="value pos">0.38</text>
            <text x="984" y="405" class="value neg">-1.12</text>
            <text x="1315" y="650" class="value pos">0.82</text>

            <!-- local axes -->
            <path d="M429 364l-22 4" stroke="#0e0" stroke-width="2"/><path d="M398 370l8-5 1 6z" fill="#00a000"/>
            <path d="M429 364l20 5" stroke="#f00" stroke-width="2"/><path d="M457 371l-9-5v6z" fill="#b00000"/>
            <path d="M429 366v29" stroke="#00f" stroke-width="2"/><path d="M429 405l-3-11h6z" fill="#0000a0"/>
            <text x="393" y="376" class="axis y">Y</text><text x="464" y="377" class="axis x">X</text><text x="429" y="417" class="axis z">Z</text>

            <!-- global axes -->
            <path d="M57 874l-22 5" stroke="#0f0" stroke-width="2"/><path d="M27 880l8-5 1 6z" fill="#00a000"/>
            <path d="M57 874l21 5" stroke="#f00" stroke-width="2"/><path d="M86 881l-9-5v6z" fill="#b00000"/>
            <path d="M57 875v30" stroke="#00f" stroke-width="2"/><path d="M57 914l-3-10h6z" fill="#0000a0"/>
            <text x="21" y="886" class="axis y">Y</text><text x="91" y="886" class="axis x">X</text><text x="57" y="927" class="axis z">Z</text>
        </svg>

        <section class="navigator">
            <div class="nav-head"><h2>Project Navigator - Display</h2><button aria-label="Close navigator"><svg viewBox="0 0 10 10"><path d="M.5 .5l9 9M9.500 .5l-9 9"/></svg></button></div>
            <div class="nav-body">
                <ul class="tree">
                    <li><i class="v"></i><i class="v open"></i><label><input type="checkbox" checked><svg><use href="#load"/></svg>Generated Loads</label></li>
                    <li><i class="v"></i><i class="v"></i><i class="end"></i><label><input type="checkbox"><svg><use href="#load"/></svg>Separately</label></li>
                    <li><i class="v"></i><i class="v h"></i><label><input type="checkbox" checked><svg><use href="#load"/></svg>Action Category Prestress</label></li>
                    <li><i class="v"></i><i class="end"></i><label><input type="checkbox" checked><svg><use href="#load"/></svg>Differentiate Negative Loads</label></li>
                    <li><i class="v open"></i><label class="bold"><input type="checkbox" checked><svg><use href="#res"/></svg>Results</label></li>
                    <li><i class="v"></i><i class="v open"></i><label><input type="checkbox" checked><svg><use href="#res"/></svg>Result Values</label></li>
                    <li><i class="v"></i><i class="v"></i><i class="v plus"></i><label><input type="checkbox" checked><svg><use href="#res"/></svg>Members, Supports, Sections</label></li>
                    <li><i class="v"></i><i class="v"></i><i class="v h"></i><label><input type="checkbox"><svg><use href="#res"/></svg>Surfaces</label></li>
                    <li><i class="v"></i><i class="v"></i><i class="end"></i><label><input type="checkbox" checked><svg><use href="#res"/></svg>Filter Active</label></li>
                    <li><i class="v"></i><i class="v h"></i><label><input type="checkbox" checked><svg><use href="#res"/></svg>Title Info</label></li>
                    <li><i class="v"></i><i class="v h"></i><label><input type="checkbox" checked><svg><use href="#res"/></svg>Max/Min Info</label></li>
                    <li><i class="v"></i><i class="v plus"></i><label><input type="checkbox" class="mixed"><svg><use href="#res"/></svg>Deformation</label></li>
                    <li><i class="v"></i><i class="v plus"></i><label><input type="checkbox" class="mixed"><svg><use href="#res"/></svg>Members</label></li>
                    <li><i class="v"></i><i class="v plus"></i><label><input type="checkbox" class="mixed"><svg><use href="#res"/></svg>Surfaces</label></li>
                    <li><i class="v"></i><i class="v plus"></i><label><input type="checkbox" class="mixed"><svg><use href="#res"/></svg>Solids</label></li>
                    <li><i class="v"></i><i class="v plus"></i><label><input type="checkbox" class="mixed"><svg><use href="#res"/></svg>Type of Display</label></li>
                    <li><i class="v"></i><i class="v plus"></i><label><input type="checkbox" checked><svg><use href="#res"/></svg>Ribs - Effective Contribution on</label></li>
                    <li><i class="v"></i><i class="v h"></i><label><input type="checkbox" checked><svg><use href="#res"/></svg>Result Beams</label></li>
                    <li><i class="v"></i><i class="v h"></i><label><input type="checkbox"><svg><use href="#res"/></svg>Results Within Column Area</label></li>
                    <li><i class="v"></i><i class="v plus"></i><label><input type="checkbox" class="mixed"><svg><use href="#res"/></svg>Support Reactions</label></li>
                    <li><i class="v"></i><i class="end"></i><label><input type="checkbox"><svg><use href="#res"/></svg>Transparent</label></li>
                    <li><i class="v open"></i><label><input type="checkbox" checked><svg><use href="#mesh"/></svg>FE Mesh</label></li>
                    <li><i class="v"></i><i class="v plus"></i><label><input type="checkbox"><svg><use href="#mesh"/></svg>On Members</label></li>
                    <li><i class="v"></i><i class="v h"></i><label><input type="checkbox"><svg><use href="#mesh"/></svg>On Member Results</label></li>
                    <li><i class="v"></i><i class="v plus"></i><label><input type="checkbox" checked><svg><use href="#mesh"/></svg>On Surfaces</label></li>
                </ul>
                <div class="scroll-v"><svg viewBox="0 0 10 6"><path d="M1 5l4-4 4 4"/></svg><div class="track"><i class="thumb"></i></div><svg viewBox="0 0 10 6"><path d="M1 1l4 4 4-4"/></svg></div>
                <div class="scroll-h"><svg viewBox="0 0 6 10"><path d="M5 1L1 5l4 4"/></svg><div class="track"><i class="thumb"></i></div><svg viewBox="0 0 6 10"><path d="M1 1l4 4-4 4"/></svg></div>
            </div>
            <div class="nav-tabs">
                <button><svg viewBox="0 0 16 16"><path d="M0 3h5v9H0z" fill="#f0c830" stroke="#8a7010"/><path d="M4 1h11v10H4z" fill="#e8f0fa" stroke="#4870b8"/><path fill="#4870b8" d="M4 1h11v3H4z"/><circle cx="9" cy="8" r="3.500" fill="#fff" stroke="#334" stroke-width="1.500"/><path d="M11 11l4 4" stroke="#c07020" stroke-width="2"/></svg>Data</button>
                <button class="current"><svg viewBox="0 0 16 16"><path d="M1 4h13v11H1z" fill="#e8f0fa" stroke="#3060a8" stroke-width="1.500"/><path d="M3 8h9M3 10.500h9M3 13h9" stroke="#3060a8"/><path d="M2 4l5-3h8v4l-7 2z" fill="#b09078" stroke="#5a4030"/></svg>Display</button>
                <button><svg viewBox="0 0 16 16"><path d="M11 1l3 1-3 8-3-1z" fill="#5878c0" stroke="#2848a0"/><path d="M8 4l-7 9h9M1 14.500h13M12 8q3 3 0 6" stroke="#3858a8" stroke-width="1.500" fill="none"/></svg>Views</button>
                <button><svg viewBox="0 0 16 16"><path d="M0 5l7-3 9 3-3 6-4 3-6-4z" fill="#10b030"/><path d="M0 5l7-3 6 2-10 6z" fill="#1838c8"/><path d="M6 10l7-3 1 2-6 4z" fill="#f0d820"/><path d="M7 12l5-2 1 1-4 3z" fill="#e02020"/><path d="M0 5l7-3 9 3-3 6-4 3-6-4z" fill="none" stroke="#222" stroke-width=".8"/></svg>Results</button>
            </div>
            <svg class="callouts" viewBox="28 212 325 645">
                <rect x="51.500" y="355" width="276" height="50"/>
                <rect x="91.500" y="822.500" width="74" height="31"/>
                <path d="M100 818L87 426" class="line"/>
                <path d="M86 409l11 20H76z" class="head"/>
            </svg>
        </section>
    </main>

    <footer class="statusbar">
        <span class="message"></span>
        <button class="down">SNAP</button>
        <button class="up">GRID</button>
        <button class="down wide">CARTES</button>
        <button class="down">OSNAP</button>
        <button class="down">GLINES</button>
        <button class="down">DXF</button>
        <span class="cell c1"></span><span class="cell c2"></span><span class="cell c3"></span><span class="cell c3"></span><span class="cell c4"></span>
        <svg class="resize" viewBox="0 0 12 12"><path d="M9 2h2v2H9zM5 6h2v2H5zM9 6h2v2H9zM1 10h2v2H1zM5 10h2v2H5zM9 10h2v2H9z" fill="#666c78"/></svg>
    </footer>
</body>
</html>
```
FILE: styles.css
```
* {
    box-sizing: border-box;
}
body {
    margin: 0;
    height: 100vh;
    display: flex;
    flex-direction: column;
    overflow: hidden;
    background: #cfd3dd;
    border: 1px solid #3a3a3a;
    border-top-color: #6e6038;
    border-left: 0;
    font-family: "Open Sans", "Noto Sans", sans-serif;
    font-size: 14px;
}
button {
    margin: 0;
    padding: 0;
    border: 0;
    background: none;
    font: inherit;
    color: inherit;
}
.sprite {
    position: absolute;
    width: 0;
    height: 0;
}

/* title bar */
.titlebar {
    display: flex;
    align-items: center;
    height: 37px;
    flex: none;
    padding-left: 8px;
    background: #fff;
}
.app-logo {
    width: 20px;
    height: 20px;
    margin-right: 6px;
}
.titlebar h1 {
    margin: 0;
    font-family: "Noto Sans", "Open Sans", sans-serif;
    font-size: 14px;
    font-weight: 400;
    color: #000;
}
.window-buttons {
    display: flex;
    margin-left: auto;
}
.window-buttons button {
    width: 59px;
    height: 37px;
}
.window-buttons svg {
    width: 12px;
    height: 12px;
    display: block;
    margin: auto;
    fill: none;
    stroke: #000;
}

/* menu */
.menubar {
    display: flex;
    align-items: center;
    height: 30px;
    flex: none;
    color: #585a66;
    font-size: 13px;
}
.grip {
    width: 10px;
    height: 20px;
    flex: none;
    background: radial-gradient(circle, #9aa0ae 1px, transparent 1px) 3px 0 / 4px 4px repeat-y;
}
.bridge {
    width: 20px;
    height: 16px;
    margin-right: 3px;
}
.menubar a {
    padding: 0 7px 0 8px;
    color: inherit;
    text-decoration: none;
}
.mdi-buttons {
    display: flex;
    gap: 10px;
    margin: 6px 7px 0 auto;
}
.mdi-buttons svg {
    display: block;
    width: 10px;
    height: 10px;
    fill: none;
    stroke: #666;
    stroke-width: 2;
}

/* toolbars */
.toolbar-row {
    display: flex;
    gap: 1px;
    height: 32px;
    flex: none;
}
.toolbar {
    display: flex;
    align-items: center;
    height: 32px;
    padding: 1px 1px 0 0;
    background: linear-gradient(#ebeff8, #dde1eb 50%, #d0d4df);
    border-bottom: 1px solid #a4a9b6;
    border-radius: 3px;
}
.tb {
    width: 28px;
    height: 28px;
    flex: none;
    border: 1px solid transparent;
}
.tb svg {
    display: block;
    width: 20px;
    height: 20px;
    margin: auto;
}
.tb.on {
    border-color: #b89860;
    background: linear-gradient(#fcc880, #fbb04c 45%, #fde08c);
}
.tb.off svg {
    opacity: .6;
}
.pl {
    fill: #70a8e0;
}
.pl.hot {
    fill: #e82828;
}
.xx {
    font: bold 9px "Liberation Serif", serif;
}
.dd {
    width: 15px;
    height: 28px;
    flex: none;
}
.dd::before {
    content: "";
    display: block;
    width: 0;
    margin: 2px auto 0;
    border: 3px solid transparent;
    border-top: 4px solid #8a8d98;
    border-bottom: 0;
}
.sep {
    width: 8px;
    height: 20px;
    flex: none;
    background: linear-gradient(90deg, transparent 3px, #a6abb8 3px, #a6abb8 4px, #fff 4px, #fff 5px, transparent 5px);
}
.loadcase {
    appearance: none;
    width: 217px;
    height: 22px;
    margin: 0 2px 0 1px;
    padding: 0 3px;
    border: 1px solid #fff;
    border-radius: 0;
    color: #000;
    font: inherit;
    background: linear-gradient(#848894, #848894) right 5px top 8px / 7px 1px no-repeat,
        linear-gradient(#848894, #848894) right 6px top 9px / 5px 1px no-repeat,
        linear-gradient(#848894, #848894) right 7px top 10px / 3px 1px no-repeat,
        linear-gradient(#848894, #848894) right 8px top 11px / 1px 1px no-repeat,
        linear-gradient(#dfe3ec, #dfe3ec) right / 18px 100% no-repeat,
        #fff;
}

/* model view */
.viewport {
    position: relative;
    flex: 1;
    min-height: 0;
    background: #fff;
    border-top: 2px solid #70737a;
    border-left: 2px solid #8a8d94;
    border-bottom: 1px solid #d8dae0;
}
.model {
    position: absolute;
    top: 0;
    left: 0;
    width: 100%;
}
.info {
    font: 11px "Liberation Sans", Arial, sans-serif;
}
.value {
    font: bold 13px "Liberation Sans", Arial, sans-serif;
    text-anchor: middle;
}
.neg {
    fill: #f00;
}
.pos {
    fill: #00f;
}
.axis {
    font: 10px "Liberation Sans", Arial, sans-serif;
    text-anchor: middle;
}
.axis.x {
    fill: #f00;
}
.axis.y {
    fill: #0d0;
}
.axis.z {
    fill: #00f;
}

/* floating navigator */
.navigator {
    position: absolute;
    top: 78px;
    left: 26px;
    width: 324px;
    border: 4px solid #e6eaf5;
    border-right-width: 3px;
    border-bottom-width: 3px;
    box-shadow: 1px 1px 0 #80848f;
    background: #cdd2dd;
}
.nav-head {
    display: flex;
    align-items: center;
    justify-content: space-between;
    height: 29px;
    padding: 0 4px 0 2px;
    background: #b8bfcb;
    color: #474b55;
}
.nav-head h2 {
    margin: 0;
    font-size: 14px;
    font-weight: 700;
}
.nav-head svg {
    display: block;
    width: 10px;
    height: 10px;
    fill: none;
    stroke: #7c808a;
    stroke-width: 2;
}
.nav-body {
    display: grid;
    grid-template-columns: 1fr 19px;
    padding: 2px 3px 0 2px;
    border: 1px solid #8e95a6;
    border-bottom: 1px solid #7c8294;
    background: #f0f0f0;
}
.tree {
    margin: 0;
    padding: 0 0 4px 1px;
    list-style: none;
    overflow: hidden;
    background: #fcfbf3;
}
.tree li {
    display: flex;
    height: 22px;
    white-space: nowrap;
}
.tree i {
    position: relative;
    width: 19px;
    flex: none;
}
.tree i::before {
    content: "";
    position: absolute;
    top: 0;
    left: 9px;
    height: 100%;
    border-left: 1px dotted #777;
}
.tree .end::before {
    height: 50%;
}
.tree .end::after,
.tree .h::after {
    content: "";
    position: absolute;
    top: 11px;
    left: 10px;
    width: 12px;
    border-top: 1px dotted #777;
}
.tree .open::after,
.tree .plus::after {
    content: "";
    position: absolute;
    top: 6px;
    left: 4px;
    width: 11px;
    height: 11px;
    border: 1px solid #8a8d94;
    background: linear-gradient(#3858a0, #3858a0) center / 7px 1px no-repeat, #f8f8f4;
}
.tree .plus::after {
    background: linear-gradient(#3858a0, #3858a0) center / 7px 1px no-repeat,
        linear-gradient(#3858a0, #3858a0) center / 1px 7px no-repeat, #f8f8f4;
}
.tree label {
    display: flex;
    align-items: center;
    color: #111;
}
.tree .bold {
    font-weight: 700;
}
.tree svg {
    width: 15px;
    height: 15px;
    margin-right: 6px;
}
.tree input {
    appearance: none;
    width: 13px;
    height: 13px;
    margin: 0 3px 2px;
    border: 1px solid #444a58;
    background: linear-gradient(135deg, #d4d8e0, #fff);
}
.tree input:checked::before {
    content: "";
    display: block;
    width: 4px;
    height: 7px;
    margin: 1px 0 0 4px;
    border: solid #111;
    border-width: 0 2px 2px 0;
    transform: rotate(40deg);
}
.tree .mixed {
    background: linear-gradient(#999, #999) center / 7px 7px no-repeat, #e4e6ec;
}
.scroll-v,
.scroll-h {
    display: flex;
    align-items: center;
    background: #f0f0f0;
}
.scroll-v {
    flex-direction: column;
    padding: 8px 0;
}
.scroll-h {
    height: 20px;
    padding: 0 8px 0 7px;
}
.nav-body > div svg {
    flex: none;
    fill: none;
    stroke: #444;
    stroke-width: 2;
}
.scroll-v svg {
    width: 10px;
    height: 6px;
}
.scroll-h svg {
    width: 6px;
    height: 10px;
}
.track {
    display: flex;
    flex: 1;
}
.scroll-v .track {
    flex-direction: column;
    width: 19px;
    padding-top: 186px;
}
.scroll-h .track {
    padding-left: 8px;
}
.thumb {
    background: #cdcdcd;
}
.scroll-v .thumb {
    height: 102px;
}
.scroll-h .thumb {
    width: 178px;
    height: 19px;
}
.nav-tabs {
    display: flex;
    align-items: center;
    gap: 6px;
    height: 30px;
    padding-left: 4px;
    font-size: 13px;
    color: #585a66;
}
.nav-tabs button {
    display: flex;
    align-items: center;
    gap: 3px;
    height: 25px;
    padding: 0 2px;
}
.nav-tabs svg {
    width: 16px;
    height: 16px;
}
.nav-tabs .current {
    border: 1px solid #f4f6fa;
    background: linear-gradient(#cdd2dd, #f0f2f6);
}
.callouts {
    position: absolute;
    top: -4px;
    left: -4px;
    width: 325px;
    height: 645px;
    pointer-events: none;
    filter: drop-shadow(4px 4px 2px rgba(0, 0, 0, .4));
}
.callouts rect {
    fill: none;
    stroke: #c00000;
    stroke-width: 3;
}
.callouts .line {
    stroke: #c00000;
    stroke-width: 4;
}
.callouts .head {
    fill: #c00000;
}

/* status bar */
.statusbar {
    display: flex;
    align-items: stretch;
    gap: 1px;
    height: 27px;
    flex: none;
    padding-top: 2px;
    border-top: 1px solid #9ca1ae;
    background: linear-gradient(#e4e6ee, #b4b8c2 45%, #a4a9b4 50%, #bcc0ca);
    font: 13px "Liberation Sans", Arial, sans-serif;
    color: #26282e;
}
.message {
    width: 795px;
}
.statusbar button {
    padding: 0 2px 5px;
    border: 1px solid #f4f4f8;
}
.statusbar .down {
    border-top: 2px solid #111;
    border-left: 2px solid #111;
    background: linear-gradient(#dcdae8, #b0b4be 50%, #bcc0ca);
}
.statusbar .up {
    padding-right: 4px;
    padding-bottom: 7px;
    border-right-color: #8a8d94;
    border-bottom-color: #8a8d94;
}
.statusbar .wide {
    padding-left: 7px;
}
.cell {
    border-left: 1px solid #9a9a9e;
}
.c1 {
    width: 188px;
}
.c2 {
    width: 88px;
}
.c3 {
    width: 73px;
}
.c4 {
    flex: 1;
}
.resize {
    width: 12px;
    height: 12px;
    align-self: flex-end;
}
```
